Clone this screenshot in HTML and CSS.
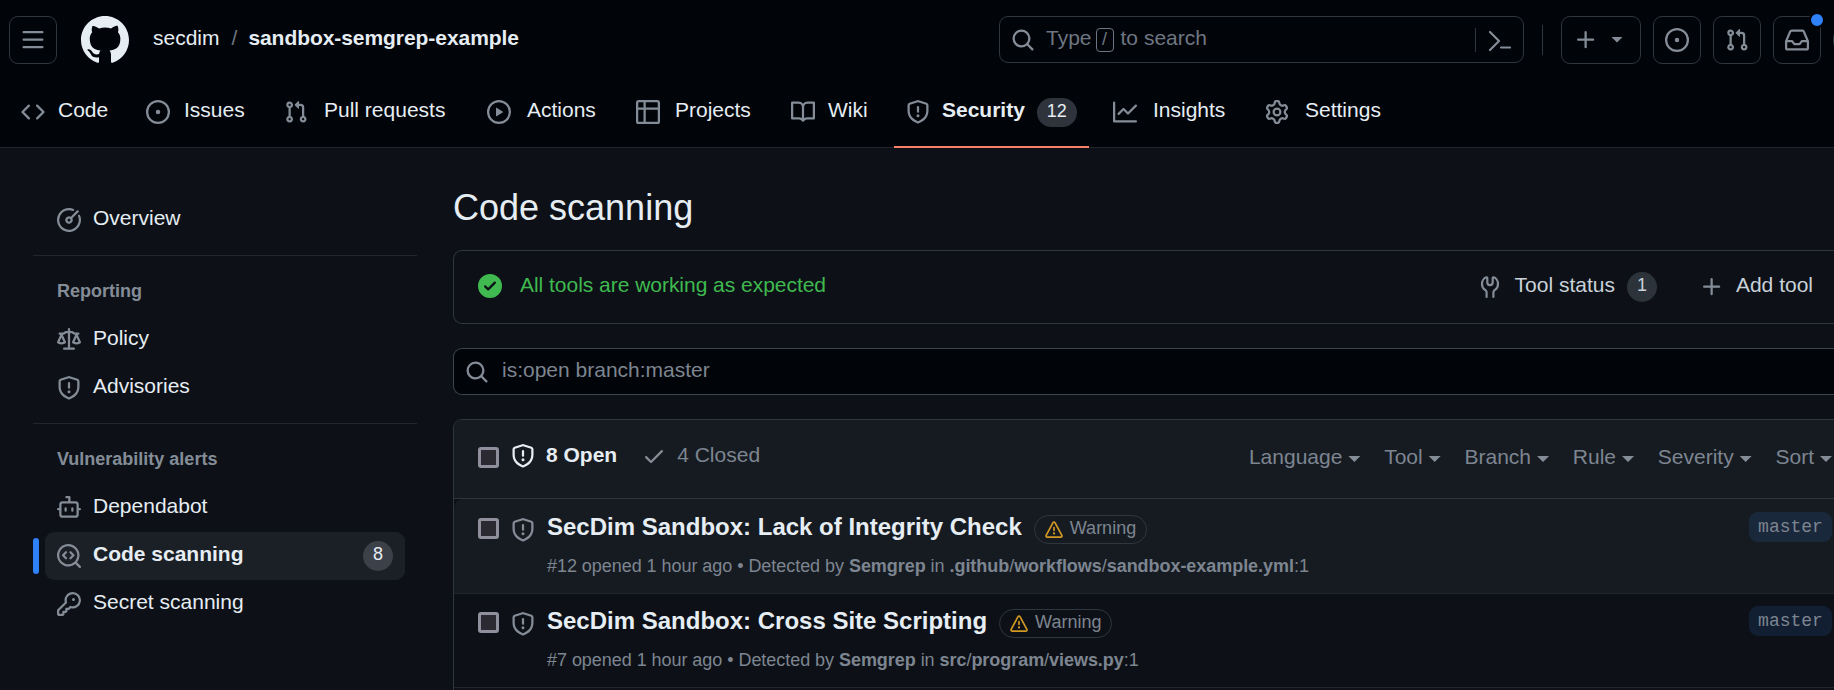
FILE: index.html
```html
<!DOCTYPE html>
<html lang="en">
<head>
<meta charset="utf-8">
<title>Code scanning alerts</title>
<link rel="stylesheet" href="styles.css">
</head>
<body>
<svg class="sprite" width="0" height="0" aria-hidden="true">
<symbol id="mark" viewBox="0 0 16 16"><path d="M8 0c4.42 0 8 3.58 8 8a8.013 8.013 0 0 1-5.45 7.59c-.4.08-.55-.17-.55-.38 0-.27.01-1.13.01-2.2 0-.75-.25-1.23-.54-1.48 1.78-.2 3.65-.88 3.65-3.95 0-.88-.31-1.59-.82-2.15.08-.2.36-1.02-.08-2.12 0 0-.67-.22-2.2.82-.64-.18-1.32-.27-2-.27-.68 0-1.36.09-2 .27-1.53-1.03-2.2-.82-2.2-.82-.44 1.1-.16 1.92-.08 2.12-.51.56-.82 1.28-.82 2.15 0 3.06 1.86 3.75 3.64 3.95-.23.2-.44.55-.51 1.07-.46.21-1.61.55-2.33-.66-.15-.24-.6-.83-1.23-.82-.67.01-.27.38.01.53.34.19.73.9.82 1.13.16.45.68 1.31 2.69.94 0 .67.01 1.3.01 1.49 0 .21-.15.45-.55.38A7.995 7.995 0 0 1 0 8c0-4.42 3.58-8 8-8Z"/></symbol>
<symbol id="bars" viewBox="0 0 16 16"><path d="M1 2.75A.75.75 0 0 1 1.75 2h12.5a.75.75 0 0 1 0 1.5H1.75A.75.75 0 0 1 1 2.75Zm0 5A.75.75 0 0 1 1.75 7h12.5a.75.75 0 0 1 0 1.5H1.75A.75.75 0 0 1 1 7.75ZM1.75 12h12.5a.75.75 0 0 1 0 1.5H1.75a.75.75 0 0 1 0-1.5Z"/></symbol>
<symbol id="code" viewBox="0 0 16 16"><path d="m11.28 3.22 4.25 4.25a.75.75 0 0 1 0 1.06l-4.25 4.25a.749.749 0 0 1-1.275-.326.749.749 0 0 1 .215-.734L13.94 8l-3.72-3.72a.749.749 0 0 1 .326-1.275.749.749 0 0 1 .734.215Zm-6.56 0a.751.751 0 0 1 1.042.018.751.751 0 0 1 .018 1.042L2.06 8l3.72 3.72a.749.749 0 0 1-.326 1.275.749.749 0 0 1-.734-.215L.47 8.53a.75.75 0 0 1 0-1.06Z"/></symbol>
<symbol id="issue" viewBox="0 0 16 16"><path d="M8 9.5a1.5 1.5 0 1 0 0-3 1.5 1.5 0 0 0 0 3Z"/><path d="M8 0a8 8 0 1 1 0 16A8 8 0 0 1 8 0ZM1.5 8a6.5 6.5 0 1 0 13 0 6.5 6.5 0 0 0-13 0Z"/></symbol>
<symbol id="pull" viewBox="0 0 16 16"><path d="M1.5 3.25a2.25 2.25 0 1 1 3 2.122v5.256a2.251 2.251 0 1 1-1.5 0V5.372A2.25 2.25 0 0 1 1.5 3.25Zm5.677-.177L9.573.677A.25.25 0 0 1 10 .854V2.5h1A2.5 2.5 0 0 1 13.5 5v5.628a2.251 2.251 0 1 1-1.5 0V5a1 1 0 0 0-1-1h-1v1.646a.25.25 0 0 1-.427.177L7.177 3.427a.25.25 0 0 1 0-.354ZM3.75 2.5a.75.75 0 1 0 0 1.5.75.75 0 0 0 0-1.5Zm0 9.5a.75.75 0 1 0 0 1.5.75.75 0 0 0 0-1.5Zm8.25.75a.75.75 0 1 0 1.5 0 .75.75 0 0 0-1.5 0Z"/></symbol>
<symbol id="play" viewBox="0 0 16 16"><path d="M8 0a8 8 0 1 1 0 16A8 8 0 0 1 8 0ZM1.5 8a6.5 6.5 0 1 0 13 0 6.5 6.5 0 0 0-13 0Zm4.879-2.773 4.264 2.559a.25.25 0 0 1 0 .428l-4.264 2.559A.25.25 0 0 1 6 10.559V5.442a.25.25 0 0 1 .379-.215Z"/></symbol>
<symbol id="table" viewBox="0 0 16 16"><path d="M0 1.75C0 .784.784 0 1.75 0h12.5C15.216 0 16 .784 16 1.75v12.5A1.75 1.75 0 0 1 14.25 16H1.75A1.75 1.75 0 0 1 0 14.25ZM6.5 6.5v8h7.75a.25.25 0 0 0 .25-.25V6.5Zm8-1.5V1.75a.25.25 0 0 0-.25-.25H6.5V5Zm-13 1.5v7.75c0 .138.112.25.25.25H5v-8ZM5 5V1.5H1.75a.25.25 0 0 0-.25.25V5Z"/></symbol>
<symbol id="book" viewBox="0 0 16 16"><path d="M0 1.75A.75.75 0 0 1 .75 1h4.253c1.227 0 2.317.59 3 1.501A3.743 3.743 0 0 1 11.006 1h4.245a.75.75 0 0 1 .75.75v10.5a.75.75 0 0 1-.75.75h-4.507a2.25 2.25 0 0 0-1.591.659l-.622.621a.75.75 0 0 1-1.06 0l-.622-.621A2.25 2.25 0 0 0 5.258 13H.75a.75.75 0 0 1-.75-.75Zm7.251 10.324.004-5.073-.002-2.253A2.25 2.25 0 0 0 5.003 2.5H1.5v9h3.757a3.75 3.75 0 0 1 1.994.574ZM8.755 4.75l-.004 7.322a3.752 3.752 0 0 1 1.992-.572H14.5v-9h-3.495a2.25 2.25 0 0 0-2.25 2.25Z"/></symbol>
<symbol id="shield" viewBox="0 0 16 16"><path d="M7.467.133a1.748 1.748 0 0 1 1.066 0l5.25 1.68A1.75 1.75 0 0 1 15 3.48V7c0 1.566-.32 3.182-1.303 4.682-.983 1.498-2.585 2.813-5.032 3.855a1.697 1.697 0 0 1-1.33 0c-2.447-1.042-4.049-2.357-5.032-3.855C1.32 10.182 1 8.566 1 7V3.48a1.75 1.75 0 0 1 1.217-1.667Zm.61 1.429a.25.25 0 0 0-.153 0l-5.25 1.68a.25.25 0 0 0-.174.238V7c0 1.358.275 2.666 1.057 3.86.784 1.194 2.121 2.34 4.366 3.297a.196.196 0 0 0 .154 0c2.245-.956 3.582-2.104 4.366-3.298C13.225 9.666 13.5 8.36 13.5 7V3.48a.251.251 0 0 0-.174-.237l-5.25-1.68ZM8.75 4.75v3a.75.75 0 0 1-1.5 0v-3a.75.75 0 0 1 1.5 0ZM9 10.5a1 1 0 1 1-2 0 1 1 0 0 1 2 0Z"/></symbol>
<symbol id="graph" viewBox="0 0 16 16"><path d="M1.5 1.75V13.5h13.75a.75.75 0 0 1 0 1.5H.75a.75.75 0 0 1-.75-.75V1.75a.75.75 0 0 1 1.5 0Zm14.28 2.53-5.25 5.25a.75.75 0 0 1-1.06 0L7 7.06 4.28 9.78a.751.751 0 0 1-1.042-.018.751.751 0 0 1-.018-1.042l3.25-3.25a.75.75 0 0 1 1.06 0L10 7.94l4.72-4.72a.751.751 0 0 1 1.042.018.751.751 0 0 1 .018 1.042Z"/></symbol>
<symbol id="gear" viewBox="0 0 16 16"><path d="M8 0a8.2 8.2 0 0 1 .701.031C9.444.095 9.99.645 10.16 1.29l.288 1.107c.018.066.079.158.212.224.231.114.454.243.668.386.123.082.233.09.299.071l1.103-.303c.644-.176 1.392.021 1.82.63.27.385.506.792.704 1.218.315.675.111 1.422-.364 1.891l-.814.806c-.049.048-.098.147-.088.294.016.257.016.515 0 .772-.01.147.038.246.088.294l.814.806c.475.469.679 1.216.364 1.891a7.977 7.977 0 0 1-.704 1.217c-.428.61-1.176.807-1.82.63l-1.102-.302c-.067-.019-.177-.011-.3.071a5.909 5.909 0 0 1-.668.386c-.133.066-.194.158-.211.224l-.29 1.106c-.168.646-.715 1.196-1.458 1.26a8.006 8.006 0 0 1-1.402 0c-.743-.064-1.289-.614-1.458-1.26l-.289-1.106c-.018-.066-.079-.158-.212-.224a5.738 5.738 0 0 1-.668-.386c-.123-.082-.233-.09-.299-.071l-1.103.303c-.644.176-1.392-.021-1.82-.63a8.12 8.12 0 0 1-.704-1.218c-.315-.675-.111-1.422.363-1.891l.815-.806c.05-.048.098-.147.088-.294a6.214 6.214 0 0 1 0-.772c.01-.147-.038-.246-.088-.294l-.815-.806C.635 6.045.431 5.298.746 4.623a7.92 7.92 0 0 1 .704-1.217c.428-.61 1.176-.807 1.82-.63l1.102.302c.067.019.177.011.3-.071.214-.143.437-.272.668-.386.133-.066.194-.158.211-.224l.29-1.106C6.009.645 6.556.095 7.299.03 7.53.01 7.764 0 8 0Zm-.571 1.525c-.036.003-.108.036-.137.146l-.289 1.105c-.147.561-.549.967-.998 1.189-.173.086-.34.183-.5.29-.417.278-.97.423-1.529.27l-1.103-.303c-.109-.03-.175.016-.195.045-.22.312-.412.644-.573.99-.014.031-.021.11.059.19l.815.806c.411.406.562.957.53 1.456a4.709 4.709 0 0 0 0 .582c.032.499-.119 1.05-.53 1.456l-.815.806c-.081.08-.073.159-.059.19.162.346.353.677.573.989.02.03.085.076.195.046l1.102-.303c.56-.153 1.113-.008 1.53.27.161.107.328.204.501.29.447.222.85.629.997 1.189l.289 1.105c.029.109.101.143.137.146a6.6 6.6 0 0 0 1.142 0c.036-.003.108-.036.137-.146l.289-1.105c.147-.561.549-.967.998-1.189.173-.086.34-.183.5-.29.417-.278.97-.423 1.529-.27l1.103.303c.109.029.175-.016.195-.045.22-.313.411-.644.573-.99.014-.031.021-.11-.059-.19l-.815-.806c-.411-.406-.562-.957-.53-1.456a4.709 4.709 0 0 0 0-.582c-.032-.499.119-1.05.53-1.456l.815-.806c.081-.08.073-.159.059-.19a6.464 6.464 0 0 0-.573-.989c-.02-.03-.085-.076-.195-.046l-1.102.303c-.56.153-1.113.008-1.53-.27a4.44 4.44 0 0 0-.501-.29c-.447-.222-.85-.629-.997-1.189l-.289-1.105c-.029-.11-.101-.143-.137-.146a6.6 6.6 0 0 0-1.142 0ZM11 8a3 3 0 1 1-6 0 3 3 0 0 1 6 0ZM9.5 8a1.5 1.5 0 1 0-3.001.001A1.5 1.5 0 0 0 9.5 8Z"/></symbol>
<symbol id="search" viewBox="0 0 16 16"><path d="M10.68 11.74a6 6 0 0 1-7.922-8.982 6 6 0 0 1 8.982 7.922l3.04 3.04a.749.749 0 0 1-.326 1.275.749.749 0 0 1-.734-.215ZM11.5 7a4.499 4.499 0 1 0-8.997 0A4.499 4.499 0 0 0 11.5 7Z"/></symbol>
<symbol id="inbox" viewBox="0 0 16 16"><path d="M2.8 2.06A1.75 1.75 0 0 1 4.41 1h7.18c.7 0 1.333.417 1.61 1.06l2.74 6.395c.04.093.06.194.06.295v4.5A1.75 1.75 0 0 1 14.25 15H1.75A1.75 1.75 0 0 1 0 13.25v-4.5c0-.101.02-.202.06-.295Zm1.61.44a.25.25 0 0 0-.23.152L1.887 8H4.75a.75.75 0 0 1 .6.3L6.625 10h2.75l1.275-1.7a.75.75 0 0 1 .6-.3h2.863L11.82 2.652a.25.25 0 0 0-.23-.152Zm10.09 7h-2.875l-1.275 1.7a.75.75 0 0 1-.6.3h-3.5a.75.75 0 0 1-.6-.3L4.375 9.5H1.5v3.75c0 .138.112.25.25.25h12.5a.25.25 0 0 0 .25-.25Z"/></symbol>
<symbol id="plus" viewBox="0 0 16 16"><path d="M7.75 2a.75.75 0 0 1 .75.75V7h4.25a.75.75 0 0 1 0 1.5H8.5v4.25a.75.75 0 0 1-1.5 0V8.5H2.75a.75.75 0 0 1 0-1.5H7V2.75A.75.75 0 0 1 7.75 2Z"/></symbol>
<symbol id="meter" viewBox="0 0 16 16"><path d="M8 1.5a6.5 6.5 0 1 0 6.016 4.035.75.75 0 0 1 1.388-.57 8 8 0 1 1-4.37-4.37.75.75 0 0 1-.569 1.389A6.473 6.473 0 0 0 8 1.5Zm6.28.22a.75.75 0 0 1 0 1.06l-4.063 4.064a2.5 2.5 0 1 1-1.06-1.06L13.22 1.72a.75.75 0 0 1 1.06 0ZM7 8a1 1 0 1 0 2 0 1 1 0 0 0-2 0Z"/></symbol>
<symbol id="law" viewBox="0 0 16 16"><path d="M8.75.75V2h.985c.304 0 .603.08.867.231l1.29.736c.038.022.08.033.124.033h2.234a.75.75 0 0 1 0 1.5h-.427l2.111 4.692a.75.75 0 0 1-.154.838l-.53-.53.529.531-.001.002-.002.002-.006.006-.006.005-.01.01-.045.04c-.21.176-.441.327-.686.45C14.556 10.78 13.88 11 13 11a4.498 4.498 0 0 1-2.023-.454 3.544 3.544 0 0 1-.686-.45l-.045-.04-.016-.015-.006-.006-.004-.004v-.001a.75.75 0 0 1-.154-.838L12.178 4.5h-.162c-.305 0-.604-.079-.868-.231l-1.29-.736a.245.245 0 0 0-.124-.033H8.75V13h2.5a.75.75 0 0 1 0 1.5h-6.5a.75.75 0 0 1 0-1.5h2.5V3.5h-.984a.245.245 0 0 0-.124.033l-1.289.737c-.265.15-.564.23-.869.23h-.162l2.112 4.692a.75.75 0 0 1-.154.838l-.53-.53.529.531-.001.002-.002.002-.006.006-.016.015-.045.04c-.21.176-.441.327-.686.45C4.556 10.78 3.88 11 3 11a4.498 4.498 0 0 1-2.023-.454 3.544 3.544 0 0 1-.686-.45l-.045-.04-.016-.015-.006-.006-.004-.004v-.001a.75.75 0 0 1-.154-.838L2.178 4.5H1.75a.75.75 0 0 1 0-1.5h2.234a.249.249 0 0 0 .125-.033l1.288-.737c.265-.15.564-.23.869-.23h.984V.75a.75.75 0 0 1 1.5 0Zm2.945 8.477c.285.135.718.273 1.305.273s1.02-.138 1.305-.273L13 6.327Zm-10 0c.285.135.718.273 1.305.273s1.02-.138 1.305-.273L3 6.327Z"/></symbol>
<symbol id="bot" viewBox="0 0 16 16"><path d="M5.75 7.5a.75.75 0 0 1 .75.75v1.5a.75.75 0 0 1-1.5 0v-1.5a.75.75 0 0 1 .75-.75Zm5.25.75a.75.75 0 0 0-1.5 0v1.5a.75.75 0 0 0 1.5 0v-1.5Z"/><path d="M6.25 0h2A.75.75 0 0 1 9 .75V3.5h3.25a2.25 2.25 0 0 1 2.25 2.25V8h.75a.75.75 0 0 1 0 1.5h-.75v2.75a2.25 2.25 0 0 1-2.25 2.25h-8.5a2.25 2.25 0 0 1-2.25-2.25V9.5H.75a.75.75 0 0 1 0-1.5h.75V5.75A2.25 2.25 0 0 1 3.75 3.5H7.5v-2H6.25a.75.75 0 0 1 0-1.5ZM3 5.75v6.5c0 .414.336.75.75.75h8.5a.75.75 0 0 0 .75-.75v-6.5a.75.75 0 0 0-.75-.75h-8.5a.75.75 0 0 0-.75.75Z"/></symbol>
<symbol id="codescan" viewBox="0 0 16 16"><path d="M8.47 4.97a.75.75 0 0 0 0 1.06L9.94 7.5 8.47 8.97a.75.75 0 1 0 1.06 1.06l2-2a.75.75 0 0 0 0-1.06l-2-2a.75.75 0 0 0-1.06 0ZM6.53 6.03a.75.75 0 0 0-1.06-1.06l-2 2a.75.75 0 0 0 0 1.06l2 2a.75.75 0 1 0 1.06-1.06L5.06 7.5l1.47-1.47Z"/><path d="M12.246 13.307a7.501 7.501 0 1 1 1.06-1.06l2.474 2.473a.749.749 0 0 1-.326 1.275.749.749 0 0 1-.734-.215ZM1.5 7.5a6.002 6.002 0 0 0 3.608 5.504 6.002 6.002 0 0 0 6.486-1.117.748.748 0 0 1 .292-.293A6 6 0 1 0 1.5 7.5Z"/></symbol>
<symbol id="key" viewBox="0 0 16 16"><path d="M10.5 0a5.499 5.499 0 1 1-1.288 10.848l-.932.932a.749.749 0 0 1-.53.22H7v.75a.749.749 0 0 1-.22.53l-.5.5a.749.749 0 0 1-.53.22H5v.75a.749.749 0 0 1-.22.53l-.5.5a.749.749 0 0 1-.53.22h-2A1.75 1.75 0 0 1 0 14.25v-2c0-.199.079-.389.22-.53l4.932-4.932A5.5 5.5 0 0 1 10.5 0Zm-4 5.5c-.001.431.069.86.205 1.269a.75.75 0 0 1-.181.768L1.5 12.56v1.69c0 .138.112.25.25.25h1.69l.06-.06v-1.19a.75.75 0 0 1 .75-.75h1.19l.06-.06v-1.19a.75.75 0 0 1 .75-.75h1.19l1.023-1.025a.75.75 0 0 1 .768-.18A4 4 0 1 0 6.5 5.5ZM11 6a1 1 0 1 1 0-2 1 1 0 0 1 0 2Z"/></symbol>
<symbol id="okfill" viewBox="0 0 16 16"><path d="M8 16A8 8 0 1 1 8 0a8 8 0 0 1 0 16Zm3.78-9.72a.751.751 0 0 0-.018-1.042.751.751 0 0 0-1.042-.018L6.75 9.19 5.28 7.72a.751.751 0 0 0-1.042.018.751.751 0 0 0-.018 1.042l2 2a.75.75 0 0 0 1.06 0Z"/></symbol>
<symbol id="check" viewBox="0 0 16 16"><path d="M13.78 4.22a.75.75 0 0 1 0 1.06l-7.25 7.25a.75.75 0 0 1-1.06 0L2.22 9.28a.751.751 0 0 1 .018-1.042.751.751 0 0 1 1.042-.018L6 10.94l6.72-6.72a.75.75 0 0 1 1.06 0Z"/></symbol>
<symbol id="alert" viewBox="0 0 16 16"><path d="M6.457 1.047c.659-1.234 2.427-1.234 3.086 0l6.082 11.378A1.75 1.75 0 0 1 14.082 15H1.918a1.75 1.75 0 0 1-1.543-2.575Zm1.763.707a.25.25 0 0 0-.44 0L1.698 13.132a.25.25 0 0 0 .22.368h12.164a.25.25 0 0 0 .22-.368Zm.53 3.996v2.5a.75.75 0 0 1-1.5 0v-2.5a.75.75 0 0 1 1.5 0ZM9 11a1 1 0 1 1-2 0 1 1 0 0 1 2 0Z"/></symbol>
<symbol id="terminal" viewBox="0 0 24 24"><path d="M3 4l9 9-9 9M14 19.5h9" fill="none" stroke="currentColor" stroke-width="2.2" stroke-linecap="round" stroke-linejoin="round"/></symbol>
<symbol id="wrench" viewBox="0 0 24 24"><path d="M8.600 22V17.400c0-1.600-.9-2-1.900-2.800C5.200 13.400 4 11.500 4 8.900 4 6 5.900 3.100 8.300 2.300c.6-.2 1 .1 1 .7v4.600c0 1.700 1.300 2.500 2.700 2.500s2.700-.8 2.700-2.500V3c0-.6.400-.900 1-.700C18.100 3.100 20 6 20 8.900c0 2.600-1.200 4.500-2.700 5.700-1 .8-1.900 1.200-1.900 2.800V22" fill="none" stroke="currentColor" stroke-width="2.2" stroke-linecap="round"/></symbol>
</svg>

<header class="header">
  <div class="topbar">
    <button class="box-btn"><svg class="icon"><use href="#bars"/></svg></button>
    <svg class="logo"><use href="#mark"/></svg>
    <div class="crumbs label"><span>secdim</span><span class="slash">/</span><b>sandbox-semgrep-example</b></div>
    <div class="search">
      <svg class="icon"><use href="#search"/></svg>
      <div class="hint"><span class="label">Type</span><kbd>/</kbd><span class="label">to search</span></div>
      <span class="rule"></span>
      <svg class="icon cmd"><use href="#terminal"/></svg>
    </div>
    <span class="rule tall"></span>
    <div class="actions">
      <button class="box-btn wide"><svg class="icon"><use href="#plus"/></svg><i class="caret"></i></button>
      <button class="box-btn"><svg class="icon"><use href="#issue"/></svg></button>
      <button class="box-btn"><svg class="icon"><use href="#pull"/></svg></button>
      <button class="box-btn inbox"><svg class="icon"><use href="#inbox"/></svg><i class="dot"></i></button>
      <span class="avatar"></span>
    </div>
  </div>
  <nav class="tabs">
    <a class="tab"><svg class="icon"><use href="#code"/></svg><span class="label">Code</span></a>
    <a class="tab issues"><svg class="icon"><use href="#issue"/></svg><span class="label">Issues</span></a>
    <a class="tab loose"><svg class="icon"><use href="#pull"/></svg><span class="label">Pull requests</span></a>
    <a class="tab loose"><svg class="icon"><use href="#play"/></svg><span class="label">Actions</span></a>
    <a class="tab mid"><svg class="icon"><use href="#table"/></svg><span class="label">Projects</span></a>
    <a class="tab"><svg class="icon"><use href="#book"/></svg><span class="label">Wiki</span></a>
    <a class="tab current"><svg class="icon"><use href="#shield"/></svg><b class="label">Security</b><span class="count">12</span></a>
    <a class="tab loose"><svg class="icon"><use href="#graph"/></svg><span class="label">Insights</span></a>
    <a class="tab loose"><svg class="icon"><use href="#gear"/></svg><span class="label">Settings</span></a>
  </nav>
</header>

<div class="page">
  <aside class="side">
    <a class="item"><svg class="icon"><use href="#meter"/></svg><span class="label">Overview</span></a>
    <hr>
    <h3>Reporting</h3>
    <a class="item"><svg class="icon"><use href="#law"/></svg><span class="label">Policy</span></a>
    <a class="item"><svg class="icon"><use href="#shield"/></svg><span class="label">Advisories</span></a>
    <hr>
    <h3>Vulnerability alerts</h3>
    <a class="item"><svg class="icon"><use href="#bot"/></svg><span class="label">Dependabot</span></a>
    <a class="item active"><svg class="icon"><use href="#codescan"/></svg><b class="label">Code scanning</b><span class="count single">8</span></a>
    <a class="item"><svg class="icon"><use href="#key"/></svg><span class="label">Secret scanning</span></a>
  </aside>

  <main class="main">
    <h1>Code scanning</h1>
    <section class="status">
      <svg class="icon ok"><use href="#okfill"/></svg>
      <span class="label ok">All tools are working as expected</span>
      <div class="tools">
        <svg class="icon"><use href="#wrench"/></svg><span class="label">Tool status</span><span class="count single gray">1</span>
        <svg class="icon add"><use href="#plus"/></svg><span class="label">Add tool</span>
      </div>
    </section>
    <div class="query"><svg class="icon"><use href="#search"/></svg><span class="label">is:open branch:master</span></div>
    <section class="list">
      <div class="list-head">
        <i class="box"></i>
        <svg class="icon bright"><use href="#shield"/></svg>
        <b class="open">8 Open</b>
        <svg class="icon tick"><use href="#check"/></svg>
        <span class="closed">4 Closed</span>
        <div class="filters">
          <span>Language<i class="caret"></i></span><span>Tool<i class="caret"></i></span><span>Branch<i class="caret"></i></span><span>Rule<i class="caret"></i></span><span>Severity<i class="caret"></i></span><span>Sort<i class="caret"></i></span>
        </div>
      </div>
      <article class="row hover">
        <i class="box"></i>
        <svg class="icon"><use href="#shield"/></svg>
        <div class="body">
          <div class="head"><h2>SecDim Sandbox: Lack of Integrity Check</h2><span class="pill"><svg><use href="#alert"/></svg><span>Warning</span></span></div>
          <p>#12 opened 1 hour ago • Detected by <b>Semgrep</b> in <b>.github</b>/<b>workflows</b>/<b>sandbox-example.yml</b>:1</p>
        </div>
        <code>master</code>
      </article>
      <article class="row">
        <i class="box"></i>
        <svg class="icon"><use href="#shield"/></svg>
        <div class="body">
          <div class="head"><h2>SecDim Sandbox: Cross Site Scripting</h2><span class="pill"><svg><use href="#alert"/></svg><span>Warning</span></span></div>
          <p>#7 opened 1 hour ago • Detected by <b>Semgrep</b> in <b>src</b>/<b>program</b>/<b>views.py</b>:1</p>
        </div>
        <code>master</code>
      </article>
    </section>
  </main>
</div>
</body>
</html>
```

FILE: styles.css
```css
* { box-sizing: border-box; }
body {
  margin: 0;
  height: 690px;
  overflow: hidden;
  background: #0d1117;
  color: #e6edf3;
  font: 21px/30px "Liberation Sans", Arial, sans-serif;
  white-space: nowrap;
}
.sprite { position: absolute; }
h1, h2, h3, p { margin: 0; }
.icon { width: 24px; height: 24px; flex: none; fill: currentColor; color: #848d97; display: block; }
.label { padding-bottom: 4px; }
.count {
  height: 29px;
  width: 40px;
  flex: none;
  border-radius: 15px;
  background: #2f333b;
  font-size: 18px;
  line-height: 26px;
  text-align: center;
}
.count.single { width: 30px; height: 30px; line-height: 27px; background: #3c4048; }
.count.gray { background: #2d333b; }
.caret {
  display: block;
  width: 12px;
  height: 6px;
  background: #848d97;
  clip-path: polygon(0 0, 100% 0, 50% 100%);
}

/* Header */
.header { height: 148px; background: #010409; border-bottom: 1px solid #21262d; }
.topbar { display: flex; align-items: center; height: 80px; padding-left: 9px; }
.topbar > * { flex: none; }
.box-btn {
  width: 48px;
  height: 48px;
  flex: none;
  padding: 0;
  display: flex;
  align-items: center;
  justify-content: center;
  background: none;
  border: 1px solid #30363d;
  border-radius: 9px;
}
.logo { width: 48px; height: 48px; margin: 0 24px; fill: #e6edf3; }
.crumbs { display: flex; width: 846px; }
.slash { color: #6e7681; margin: 0 11px 0 12px; }
.crumbs b { letter-spacing: -0.06px; }
.search {
  display: flex;
  align-items: center;
  width: 525px;
  height: 47px;
  border: 1px solid #30363d;
  border-radius: 9px;
  padding-left: 11px;
  margin-top: -1px;
  color: #6e7681;
}
.hint { display: flex; align-items: center; margin-left: 11px; flex: 1; }
kbd {
  width: 18px;
  height: 24px;
  margin: 0 7px 0 4px;
  border: 1px solid #6e7681;
  border-radius: 4px;
  font: 18px/21px "Liberation Sans", Arial, sans-serif;
  text-align: center;
}
.rule { width: 1px; height: 24px; background: #30363d; }
.rule.tall { height: 30px; margin: 0 18px; }
.cmd { margin: 0 12px 0 11px; }
.actions { display: flex; gap: 12px; }
.box-btn.wide { width: 80px; gap: 13px; padding-right: 5px; }
.box-btn.wide .caret { margin-top: -1px; }
.inbox { position: relative; }
.dot {
  position: absolute;
  top: -5px;
  right: -5px;
  width: 16px;
  height: 16px;
  border-radius: 50%;
  background: #2f81f7;
  border: 2px solid #010409;
}
.avatar { width: 48px; height: 48px; flex: none; border-radius: 50%; background: #30363d; }

/* Repository tabs */
.tabs {
  display: grid;
  grid-template-columns: 125px 138px 203px 149px 155px 115px 207px 152px 150px;
  padding-left: 9px;
  height: 68px;
}
.tab { display: flex; align-items: center; height: 64px; padding-left: 12px; gap: 13px; }
.tab.issues { gap: 14px; }
.tab.loose { gap: 16px; }
.tab.mid { gap: 15px; }
.current { position: relative; width: 195px; }
.tab.current { gap: 12px; }
.current .count { margin-top: 1px; }
.current::after {
  content: "";
  position: absolute;
  inset: 66px 0 auto;
  height: 2px;
  background: #f78166;
}

/* Body layout */
.page { display: flex; }
.side { width: 384px; flex: none; margin: 48px 36px 0 33px; }
.item {
  position: relative;
  display: flex;
  align-items: center;
  gap: 12px;
  height: 48px;
  width: 360px;
  margin-left: 12px;
  padding: 0 12px;
}
.side hr { border: 0; height: 1px; margin: 11px 0 12px; background: #21262d; }
.side h3 { font-size: 18px; line-height: 24px; padding: 11px 24px 13px; color: #848d97; }
.active { background: #1b1f26; border-radius: 9px; }
.active .count { margin-left: auto; }
.active::before {
  content: "";
  position: absolute;
  left: -12px;
  top: 6px;
  width: 6px;
  height: 36px;
  border-radius: 9px;
  background: #2f81f7;
}
.main { flex: 1; padding-top: 36px; }
h1 { font-size: 36px; line-height: 48px; font-weight: 400; height: 66px; }
.status {
  display: flex;
  align-items: center;
  gap: 18px;
  height: 74px;
  border: 1px solid #30363d;
  border-right: 0;
  border-radius: 9px 0 0 9px;
  padding: 0 21px 2px 24px;
}
.status > .label { padding-bottom: 3px; letter-spacing: -0.03px; }
.ok { color: #3fb950; }
.tools { display: flex; align-items: center; margin: 2px 0 0 auto; color: #c9d1d9; }
.tools .label { margin-left: 13px; padding-bottom: 5px; }
.tools .count { margin-left: 12px; }
.tools .add { margin: 0 -1px 0 43px; }
.query {
  display: flex;
  align-items: center;
  gap: 13px;
  height: 47px;
  margin: 24px 0;
  padding-left: 11px;
  background: #010409;
  border: 1px solid #3d444d;
  border-right: 0;
  border-radius: 9px 0 0 9px;
  color: #7d8590;
}

/* Alert list */
.list { height: 300px; border: 1px solid #30363d; border-width: 1px 0 0 1px; border-radius: 9px 0 0; overflow: hidden; color: #7d8590; }
.list-head {
  display: flex;
  align-items: flex-start;
  height: 79px;
  padding: 24px 0 0 24px;
  background: #161b22;
  border-bottom: 1px solid #30363d;
}
.box {
  width: 21px;
  height: 21px;
  flex: none;
  margin: 3px 12px 0 0;
  background: #2b2a33;
  border: 3px solid #8f8f9d;
  border-radius: 3px;
}
.icon.bright, .open { color: #e6edf3; }
.open { margin: -4px 25px 0 11px; }
.closed { margin: -4px 0 0 11px; }
.filters { display: flex; gap: 23.8px; margin: -2px 2px 0 auto; }
.filters span { display: flex; align-items: center; gap: 6px; }
.filters .caret { margin-top: 4px; }
.row { display: flex; align-items: flex-start; height: 94px; padding: 15px 2px 0 24px; border-bottom: 1px solid #21262d; }
.row.hover { height: 95px; padding-top: 16px; background: #161b22; border-radius: 9px 0 0; }
.row .icon { margin-top: 3px; }
.body { flex: 1; padding-left: 12px; }
.head { display: flex; height: 33px; }
h2 { font-size: 24px; line-height: 24px; color: #e6edf3; }
.pill {
  display: flex;
  align-items: center;
  gap: 7px;
  width: 113px;
  height: 29px;
  border: 1px solid #30363d;
  border-radius: 15px;
  margin-left: 12px;
  padding-left: 10px;
  font-size: 18px;
}
.pill svg { width: 18px; height: 18px; fill: #d29922; }
.pill span { padding-bottom: 3px; }
.body p { font-size: 18px; line-height: 30px; padding-top: 3px; letter-spacing: -0.045px; }
code {
  width: 83px;
  height: 30px;
  margin-top: -3px;
  border-radius: 9px;
  background: rgba(56, 139, 253, .12);
  font: 18px/31px "Liberation Mono", monospace;
  text-align: center;
}
```
